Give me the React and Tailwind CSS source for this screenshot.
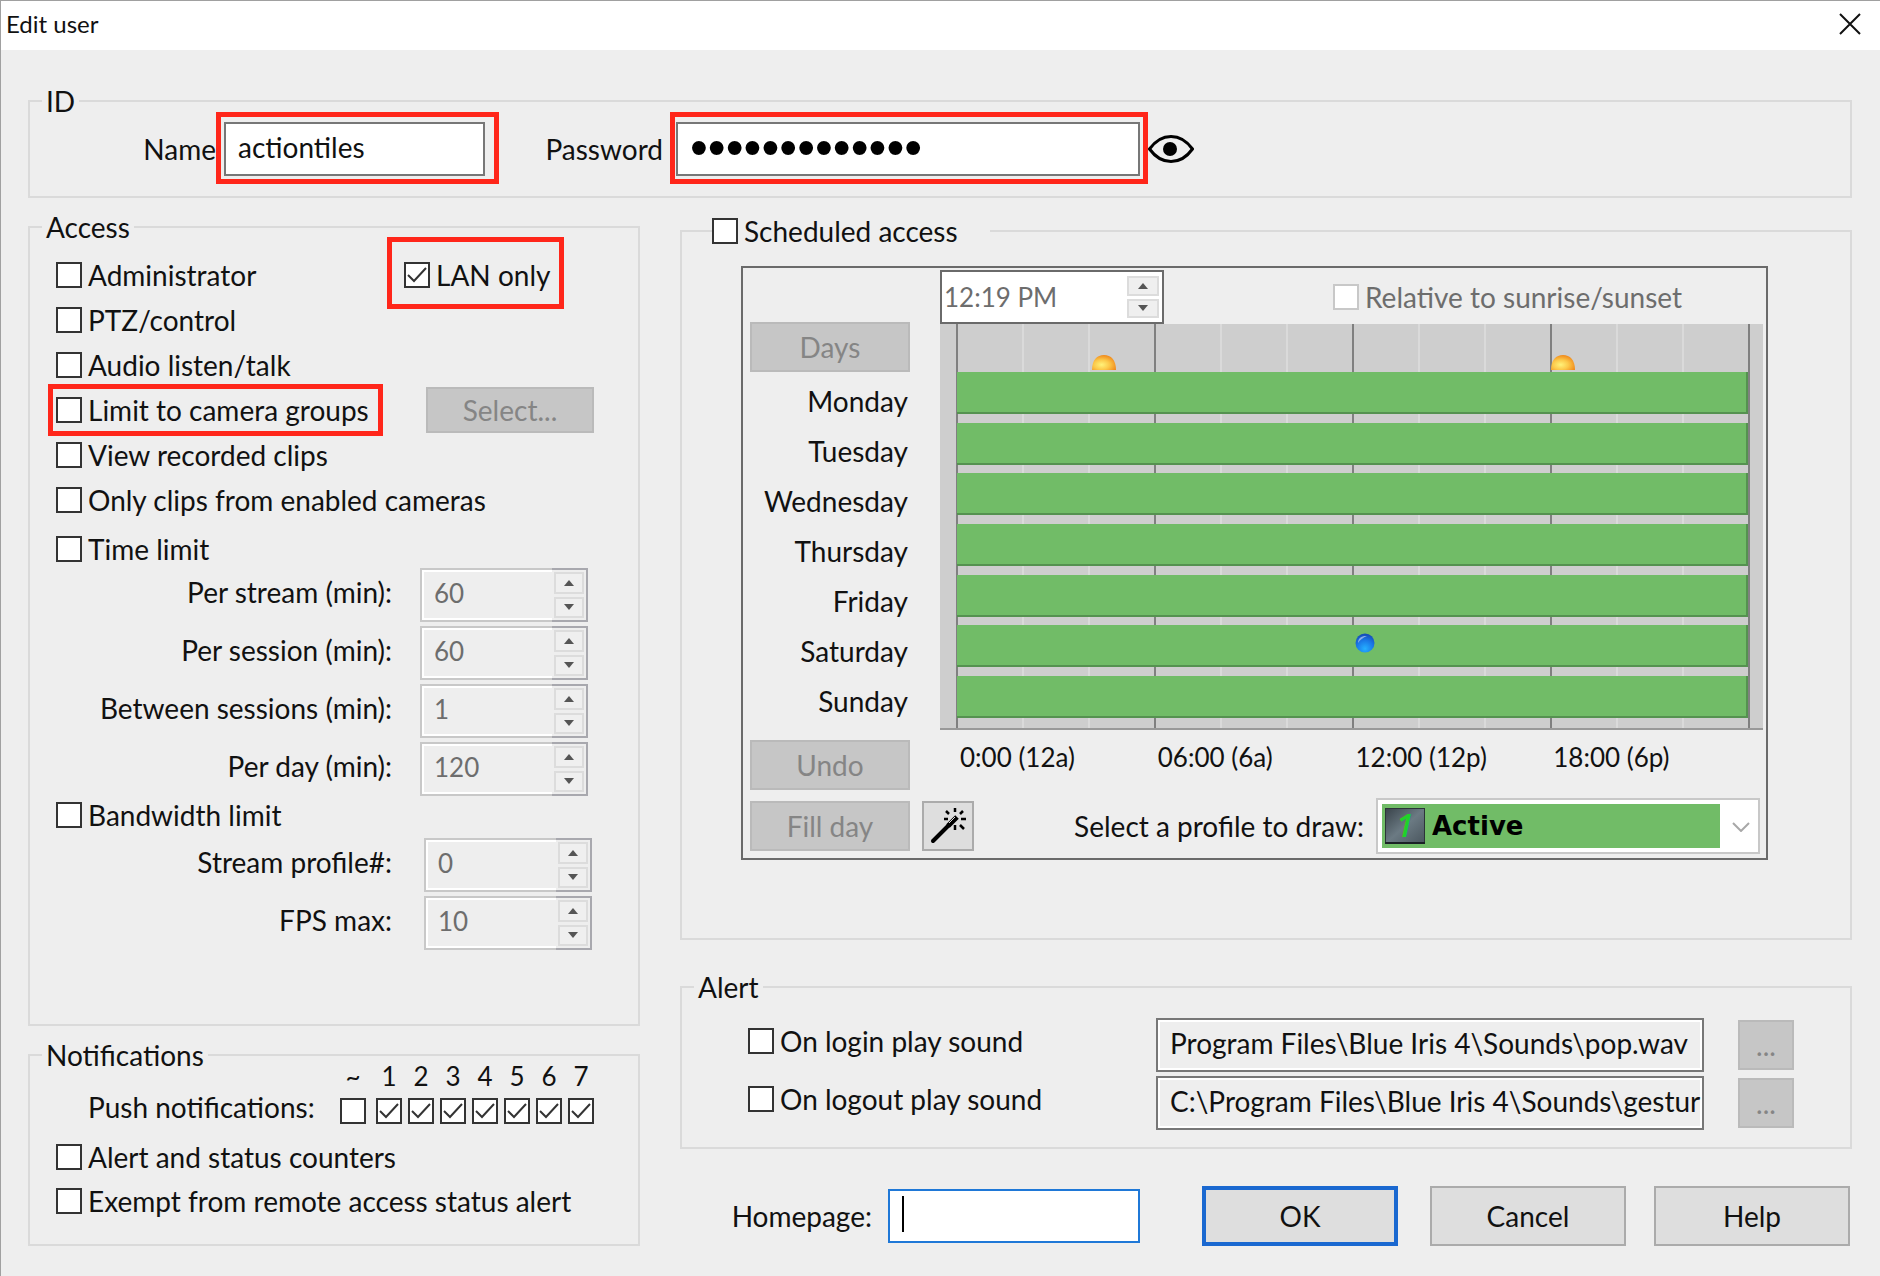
import { useState } from 'react'

const DAYS = ['Monday', 'Tuesday', 'Wednesday', 'Thursday', 'Friday', 'Saturday', 'Sunday']
const HOURS = ['0:00 (12a)', '06:00 (6a)', '12:00 (12p)', '18:00 (6p)']
const SLOTS = ['~', '1', '2', '3', '4', '5', '6', '7']

function Mark({ className }) {
  return <span className={`pointer-events-none absolute border-[5px] border-[#ff261a] ${className}`} />
}

function Box({ defaultChecked = false, disabled = false }) {
  const [checked, setChecked] = useState(defaultChecked)
  return (
    <span className="grid shrink-0">
      <input
        type="checkbox"
        checked={checked}
        disabled={disabled}
        onChange={(e) => setChecked(e.target.checked)}
        className="col-start-1 row-start-1 h-[26px] w-[26px] appearance-none border-2 border-[#333] bg-white disabled:border-[#c8c8c8]"
      />
      {checked && (
        <svg viewBox="0 0 26 26" className="pointer-events-none col-start-1 row-start-1 h-[26px] w-[26px]">
          <path d="M4 13l6 6L22 6" fill="none" stroke="#333" strokeWidth="2" />
        </svg>
      )}
    </span>
  )
}

function Check({ label, className = '', children, ...box }) {
  return (
    <label className={`relative flex w-fit items-center gap-[6px] whitespace-nowrap ${className}`}>
      <Box {...box} />
      {label}
      {children}
    </label>
  )
}

function Group({ title, className = '', children }) {
  return (
    <fieldset className={`min-w-0 border-2 border-[#dadada] ${className}`}>
      <legend className="ml-3 px-1">{title}</legend>
      {children}
    </fieldset>
  )
}

function Arrows({ className = '' }) {
  const btn = 'flex w-full flex-1 items-center justify-center border-2 border-[#dcdcdc] bg-[#efefef]'
  return (
    <div className={`flex flex-col gap-[3px] ${className}`}>
      <button type="button" disabled aria-label="Increase" className={btn}>
        <svg viewBox="0 0 10 6" className="h-[6px] w-[10px]"><path d="M5 0l5 6H0z" fill="#555" /></svg>
      </button>
      <button type="button" disabled aria-label="Decrease" className={btn}>
        <svg viewBox="0 0 10 6" className="h-[6px] w-[10px]"><path d="M0 0h10L5 6z" fill="#555" /></svg>
      </button>
    </div>
  )
}

function SpinRow({ label, value, className = '' }) {
  return (
    <label className="flex items-start">
      <span className="w-[362px] pt-[11px] text-right">{label}</span>
      <span className={`flex h-[54px] w-[168px] ${className}`}>
        <input
          disabled
          defaultValue={value}
          className="min-w-0 flex-1 border-2 border-r-0 border-[#c8c8c8] pb-1 pl-3 text-[26px] text-[#6d6d6d] shadow-[inset_2px_2px_0_#fff,inset_0_-2px_0_#fff]"
        />
        <span className="flex w-9 border-2 border-l-0 border-[#a8a8ae] p-[2px]">
          <Arrows className="flex-1" />
        </span>
      </span>
    </label>
  )
}

function GreyButton({ className = '', children }) {
  return (
    <button type="button" disabled className={`border-2 border-[#bababa] bg-[#c6c6c6] text-[#858585] ${className}`}>
      {children}
    </button>
  )
}

function EyeIcon() {
  return (
    <svg viewBox="0 0 46 28" className="h-7 w-[46px]">
      <path d="M1.5 14C8 5 15 1.5 23 1.5S38 5 44.5 14C38 23 31 26.5 23 26.5S8 23 1.5 14z" fill="none" stroke="#000" strokeWidth="3" />
      <circle cx="22" cy="14" r="7" />
    </svg>
  )
}

function WandIcon() {
  return (
    <svg viewBox="0 0 40 40" className="h-10 w-10" fill="none" stroke="#000">
      <path d="M5 35L21 19" strokeWidth="4" strokeLinecap="round" />
      <path d="M20 20L29 11" strokeWidth="5" />
      <path d="M21 17l6-6" stroke="#ddd" strokeWidth="1" />
      <path d="M27 2v4M27 19v5M18 5l3 3M35 5l-3 3M16 13h4M33 13h5M32 19l4 4" strokeWidth="2.5" />
    </svg>
  )
}

function SunIcon({ className }) {
  return (
    <svg viewBox="0 0 26 16" className={`absolute bottom-[2px] h-4 w-[26px] ${className}`}>
      <defs>
        <radialGradient id="sun" cx="0.4" cy="0.65" r="0.65">
          <stop offset="0" stopColor="#fff27a" />
          <stop offset="0.5" stopColor="#fcc94a" />
          <stop offset="1" stopColor="#f08a1c" />
        </radialGradient>
      </defs>
      <path d="M1 16C1 6 6 1 13 1s12 5 12 15z" fill="url(#sun)" />
    </svg>
  )
}

function BallIcon() {
  return (
    <svg viewBox="0 0 20 20" className="absolute left-[50.5%] top-2 h-5 w-5">
      <defs>
        <radialGradient id="ball" cx="0.5" cy="0.8" r="0.8">
          <stop offset="0" stopColor="#25b0ff" />
          <stop offset="0.55" stopColor="#1a78e6" />
          <stop offset="1" stopColor="#1648b4" />
        </radialGradient>
      </defs>
      <circle cx="10" cy="10" r="9.5" fill="url(#ball)" />
      <path d="M3 10C3 5 7 2.5 12 3 8 4.5 5 7 3 10z" fill="#a8bff0" opacity="0.8" />
    </svg>
  )
}

function ProfileIcon() {
  return (
    <svg viewBox="0 0 40 36" className="pointer-events-none absolute left-[7px] top-2 h-9 w-10 overflow-visible">
      <defs>
        <linearGradient id="steel" x1="0" y1="0" x2="1" y2="1">
          <stop offset="0" stopColor="#39434a" />
          <stop offset="0.5" stopColor="#6b7a83" />
          <stop offset="1" stopColor="#4a565e" />
        </linearGradient>
      </defs>
      <rect x="0.5" y="0.5" width="39" height="35" fill="url(#steel)" stroke="#2c3438" />
      <path d="M0 35h40" stroke="#1b2226" strokeWidth="2" />
      <text x="11" y="29" fontSize="32" fontStyle="italic" fontWeight="600" fontFamily="Open Sans, sans-serif" fill="#1fd22a">1</text>
    </svg>
  )
}

function Schedule() {
  return (
    <div className="ml-[59px] mr-[82px] mt-[22px] border-2 border-[#6a6a6a] pb-1 pl-[7px] pt-[2px]">
      <div className="ml-[190px] flex h-[54px] items-center justify-between">
        <div className="flex h-full w-56 border-2 border-[#6a6a6a] bg-white py-1 pr-[3px]">
          <input disabled aria-label="Time" defaultValue="12:19 PM" className="min-w-0 flex-1 pl-[2px] text-[26px] text-[#6d6d6d]" />
          <Arrows className="w-8" />
        </div>
        <Check label="Relative to sunrise/sunset" disabled className="mr-[84px] text-[#6d6d6d]" />
      </div>

      <div className="mr-[3px] grid grid-cols-[160px_1fr] gap-x-[30px]">
        <div>
          <GreyButton className="-mt-[2px] h-[50px] w-full">Days</GreyButton>
          <ul className="mt-1 pr-[2px] text-right">
            {DAYS.map((d) => (
              <li key={d} className="h-[50px] leading-[50px]">{d}</li>
            ))}
          </ul>
        </div>

        <div className="relative h-[406px] border-b-2 border-[#999] bg-[#cecece] pl-[17px] pr-[15px]">
          <div className="absolute inset-y-0 left-[16px] right-[13px] grid grid-cols-12 border-r-2 border-[#808080]">
            {Array.from({ length: 12 }, (_, i) => (
              <span key={i} className={`border-l-2 ${i % 3 === 0 ? 'border-[#808080]' : 'border-[#dadada]'}`} />
            ))}
          </div>
          <div className="relative h-12">
            <SunIcon className="left-[17%]" />
            <SunIcon className="left-[75%]" />
          </div>
          <div className="relative flex h-[346px] flex-col justify-between">
            {DAYS.map((d) => (
              <div key={d} className="relative h-[42px] border-b-2 border-r-2 border-[#559250] bg-[#71bc67]">
                {d === 'Saturday' && <BallIcon />}
              </div>
            ))}
          </div>
        </div>

        <GreyButton className="mt-[10px] h-[50px]">Undo</GreyButton>
        <div className="grid grid-cols-4 pl-5 pr-3 pt-[14px] text-[26px]">
          {HOURS.map((h) => (
            <span key={h} className="whitespace-nowrap">{h}</span>
          ))}
        </div>
      </div>

      <div className="mr-[6px] mt-2 flex items-center">
        <GreyButton className="h-[50px] w-40">Fill day</GreyButton>
        <button type="button" aria-label="Wizard" className="ml-3 flex h-[50px] w-[52px] items-center justify-center border-2 border-[#ababab] bg-[#dedede]">
          <WandIcon />
        </button>
        <label htmlFor="profile" className="ml-auto mr-3 whitespace-nowrap">Select a profile to draw:</label>
        <div className="relative flex h-14 w-[384px] border-2 border-[#c8c8c8] bg-white py-1 pl-1">
          <select
            id="profile"
            className="h-full w-[338px] appearance-none bg-[#71bc67] pl-[50px] font-['DejaVu_Sans'] text-[26px] font-bold text-black"
          >
            <option>Active</option>
          </select>
          <ProfileIcon />
          <svg viewBox="0 0 18 10" className="pointer-events-none absolute right-2 top-[22px] h-[10px] w-[18px]">
            <path d="M1 1l8 8 8-8" fill="none" stroke="#a8a8a8" strokeWidth="2" />
          </svg>
        </div>
      </div>
    </div>
  )
}

function SoundRow({ label, path }) {
  return (
    <div className="flex items-start">
      <Check label={label} className="mt-[10px]" />
      <input
        readOnly
        aria-label={`${label} file`}
        defaultValue={path}
        className="ml-auto h-[54px] w-[548px] border-2 border-[#777] pb-1 pl-3 shadow-[inset_0_0_0_2px_#fff]"
      />
      <GreyButton className="ml-[34px] mt-[2px] h-[50px] w-14">...</GreyButton>
    </div>
  )
}

function PushButton({ className = 'border-2 border-[#ababab]', children }) {
  return (
    <button type="button" className={`h-[60px] w-[196px] bg-[#dedede] ${className}`}>
      {children}
    </button>
  )
}

export default function App() {
  return (
    <div className="flex min-h-screen flex-col border-l border-t border-[#a0a0a0] bg-[#eee] font-['Lato','Noto_Sans',sans-serif] text-[28px] leading-[26px] text-[#111]">
      <header className="flex h-[49px] items-center justify-between bg-white pb-1 pl-[5px] pr-[19px]">
        <h1 className="text-[24px]">Edit user</h1>
        <button type="button" aria-label="Close">
          <svg viewBox="0 0 22 22" className="h-[22px] w-[22px]">
            <path d="M1 1l20 20M21 1L1 21" stroke="#111" strokeWidth="2" />
          </svg>
        </button>
      </header>

      <form className="px-[27px] pr-7 pt-[38px]" onSubmit={(e) => e.preventDefault()}>
        <Group title="ID" className="pb-5">
          <div className="mt-2 flex items-center">
            <label htmlFor="name" className="w-[194px] pr-2 text-right">Name</label>
            <div className="relative">
              <input id="name" defaultValue="actiontiles" className="block h-[54px] w-[261px] border-2 border-[#777] bg-white pb-1 pl-3" />
              <Mark className="-bottom-2 -left-2 -right-[14px] -top-[10px]" />
            </div>
            <label htmlFor="password" className="w-[191px] pr-[13px] text-right">Password</label>
            <div className="relative">
              <input
                id="password"
                type="password"
                defaultValue="actiontiles12"
                className="block h-[54px] w-[464px] border-2 border-[#777] bg-white pb-1 pl-3 font-['Liberation_Sans'] text-[51px] text-black"
              />
              <Mark className="-bottom-2 -left-[6px] -right-2 -top-[10px]" />
            </div>
            <button type="button" aria-label="Show password" className="ml-2">
              <EyeIcon />
            </button>
          </div>
        </Group>

        <div className="mt-4 flex gap-10">
          <div className="w-[612px] shrink-0">
            <Group title="Access" className="pb-[74px]">
              <div className="flex flex-col gap-[19px] pl-[26px] pt-[22px]">
                <div className="flex">
                  <div className="w-[348px]">
                    <Check label="Administrator" />
                  </div>
                  <Check label="LAN only" defaultChecked>
                    <Mark className="-bottom-[21px] -left-[17px] -right-[14px] -top-[25px]" />
                  </Check>
                </div>
                <Check label="PTZ/control" />
                <Check label="Audio listen/talk" />
                <div className="flex h-[26px] items-center">
                  <div className="w-[370px]">
                    <Check label="Limit to camera groups">
                      <Mark className="-bottom-[13px] -left-2 -right-[14px] -top-[13px]" />
                    </Check>
                  </div>
                  <GreyButton className="h-[46px] w-[168px]">Select...</GreyButton>
                </div>
                <Check label="View recorded clips" />
                <Check label="Only clips from enabled cameras" />
              </div>

              <Check label="Time limit" className="ml-[26px] mt-[23px]" />
              <div className="mt-[6px] flex flex-col gap-1">
                <SpinRow label="Per stream (min):" value="60" className="ml-7" />
                <SpinRow label="Per session (min):" value="60" className="ml-7" />
                <SpinRow label="Between sessions (min):" value="1" className="ml-7" />
                <SpinRow label="Per day (min):" value="120" className="ml-7" />
              </div>

              <Check label="Bandwidth limit" className="ml-[26px] mt-[6px]" />
              <div className="mt-[10px] flex flex-col gap-1">
                <SpinRow label="Stream profile#:" value="0" className="ml-8" />
                <SpinRow label="FPS max:" value="10" className="ml-8" />
              </div>
            </Group>

            <Group title="Notifications" className="mt-4 pb-[30px]">
              <div className="-mt-[5px] flex items-end pl-[58px]">
                <span className="w-[252px] pb-1">Push notifications:</span>
                <div className="flex gap-[6px] text-[26px]">
                  {SLOTS.map((s) => (
                    <label key={s} className="flex flex-col items-center gap-[9px] first:mr-1">
                      {s}
                      <Box defaultChecked={s !== '~'} />
                    </label>
                  ))}
                </div>
              </div>
              <div className="mt-5 flex flex-col gap-[18px] pl-[26px]">
                <Check label="Alert and status counters" />
                <Check label="Exempt from remote access status alert" />
              </div>
            </Group>
          </div>

          <div className="min-w-0 flex-1 pt-1">
            <fieldset className="min-w-0 border-2 border-[#dadada] pb-[78px]">
              <legend className="ml-[30px] pr-8">
                <Check label="Scheduled access" />
              </legend>
              <Schedule />
            </fieldset>

            <Group title="Alert" className="mt-[34px] pb-[17px]">
              <div className="flex flex-col gap-1 pl-[66px] pr-14 pt-[18px]">
                <SoundRow label="On login play sound" path="Program Files\Blue Iris 4\Sounds\pop.wav" />
                <SoundRow label="On logout play sound" path="C:\Program Files\Blue Iris 4\Sounds\gestur" />
              </div>
            </Group>

            <div className="mt-[37px] flex items-center justify-end pr-[2px]">
              <label htmlFor="homepage">Homepage:</label>
              <div className="relative ml-4 mr-[62px]">
                <input
                  id="homepage"
                  className="block h-[54px] w-[252px] border-2 border-[#1f78d7] bg-white pl-3 outline-none"
                />
                <span className="pointer-events-none absolute left-[14px] top-[7px] h-9 w-[2px] bg-black" />
              </div>
              <PushButton className="mr-8 border-4 border-[#1a68d0]">OK</PushButton>
              <PushButton>Cancel</PushButton>
              <span className="w-7" />
              <PushButton>Help</PushButton>
            </div>
          </div>
        </div>
      </form>
    </div>
  )
}
